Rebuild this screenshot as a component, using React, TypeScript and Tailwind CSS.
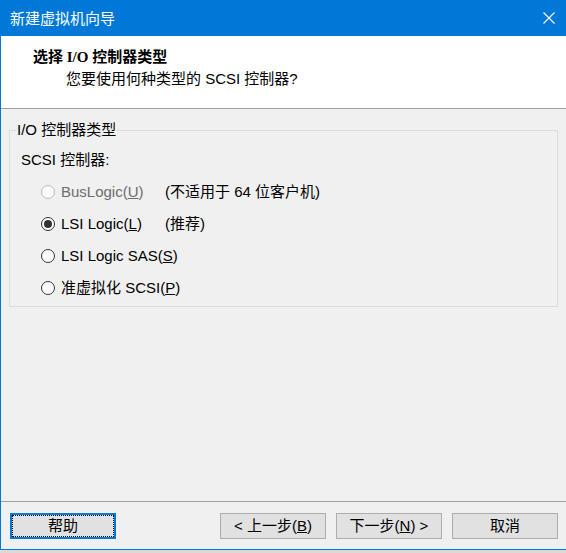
import type { ReactNode } from 'react';

const ui = 'font-["Liberation_Sans","Noto_Sans_CJK_SC",sans-serif] text-[15px] leading-[20px]';

function Radio({ checked, disabled }: { checked?: boolean; disabled?: boolean }) {
  return (
    <span
      className={`flex h-[14px] w-[14px] shrink-0 items-center justify-center rounded-full border ${
        disabled ? 'border-[#bcbcbc] bg-[#fcfcfc]' : 'border-[#333333] bg-white'
      }`}
    >
      {checked && <span className="h-[8px] w-[8px] rounded-full bg-[#333333]" />}
    </span>
  );
}

function Option({
  label,
  note,
  checked,
  disabled,
}: {
  label: ReactNode;
  note?: string;
  checked?: boolean;
  disabled?: boolean;
}) {
  return (
    <div className="flex h-[32px] items-center whitespace-nowrap pl-[31px]">
      <Radio checked={checked} disabled={disabled} />
      <span className={`ml-[6px] min-w-[104px] shrink-0 ${disabled ? 'text-[#6d6d6d]' : 'text-black'}`}>{label}</span>
      {note && <span className="text-black">{note}</span>}
    </div>
  );
}

function Button({ children, focused }: { children: ReactNode; focused?: boolean }) {
  return (
    <button
      className={`flex h-[26px] w-[106px] items-center justify-center whitespace-nowrap bg-[#e1e1e1] text-black ${
        focused ? 'border-2 border-[#0078d7]' : 'border border-[#adadad]'
      }`}
    >
      {focused ? (
        <span className="flex h-full w-full items-center justify-center border border-dotted border-black">
          {children}
        </span>
      ) : (
        children
      )}
    </button>
  );
}

export default function App() {
  return (
    <div className={`h-[553px] w-[566px] overflow-hidden bg-[#dadada] ${ui}`}>
      <div className="flex h-[550px] flex-col border-b border-l border-[#0078d7] bg-[#f0f0f0]">
        {/* Title bar */}
        <div className="flex h-[36px] shrink-0 items-center justify-between bg-[#0078d7] pl-[9px] pr-[11px] text-white">
          <span className='font-["Noto_Sans_CJK_SC",sans-serif]'>新建虚拟机向导</span>
          <svg width="12" height="12" viewBox="0 0 12 12" fill="none" stroke="white" strokeWidth="1.1">
            <path d="M0.5 0.5 L11.5 11.5 M11.5 0.5 L0.5 11.5" />
          </svg>
        </div>

        {/* Header */}
        <div className="h-[73px] shrink-0 border-b border-[#a0a0a0] bg-white pl-[32px] pt-[11px]">
          <div className='font-["Liberation_Serif","Noto_Sans_CJK_SC",serif] font-bold'>选择 I/O 控制器类型</div>
          <div className="ml-[33px] mt-[2px]">您要使用何种类型的 SCSI 控制器?</div>
        </div>

        {/* Body */}
        <div className="flex-1 px-[8px] pt-[11px]">
          <fieldset className="border border-[#dcdcdc] pb-[2px]">
            <legend className="ml-[6px] px-[1px]">I/O 控制器类型</legend>
            <div className="mt-[10px] pl-[11px]">SCSI 控制器:</div>
            <div className="mt-[6px]">
              <Option
                disabled
                label={
                  <>
                    BusLogic(<span className="underline">U</span>)
                  </>
                }
                note="(不适用于 64 位客户机)"
              />
              <Option
                checked
                label={
                  <>
                    LSI Logic(<span className="underline">L</span>)
                  </>
                }
                note="(推荐)"
              />
              <Option
                label={
                  <>
                    LSI Logic SAS(<span className="underline">S</span>)
                  </>
                }
              />
              <Option
                label={
                  <>
                    准虚拟化 SCSI(<span className="underline">P</span>)
                  </>
                }
              />
            </div>
          </fieldset>
        </div>

        {/* Footer */}
        <div className="flex h-[48px] shrink-0 items-start border-t border-[#a0a0a0] pl-[9px] pt-[11px]">
          <Button focused>帮助</Button>
          <div className="ml-auto mr-[8px] flex gap-[10px]">
            <Button>
              &lt; 上一步(<span className="underline">B</span>)
            </Button>
            <Button>
              下一步(<span className="underline">N</span>) &gt;
            </Button>
            <Button>取消</Button>
          </div>
        </div>
      </div>
    </div>
  );
}
